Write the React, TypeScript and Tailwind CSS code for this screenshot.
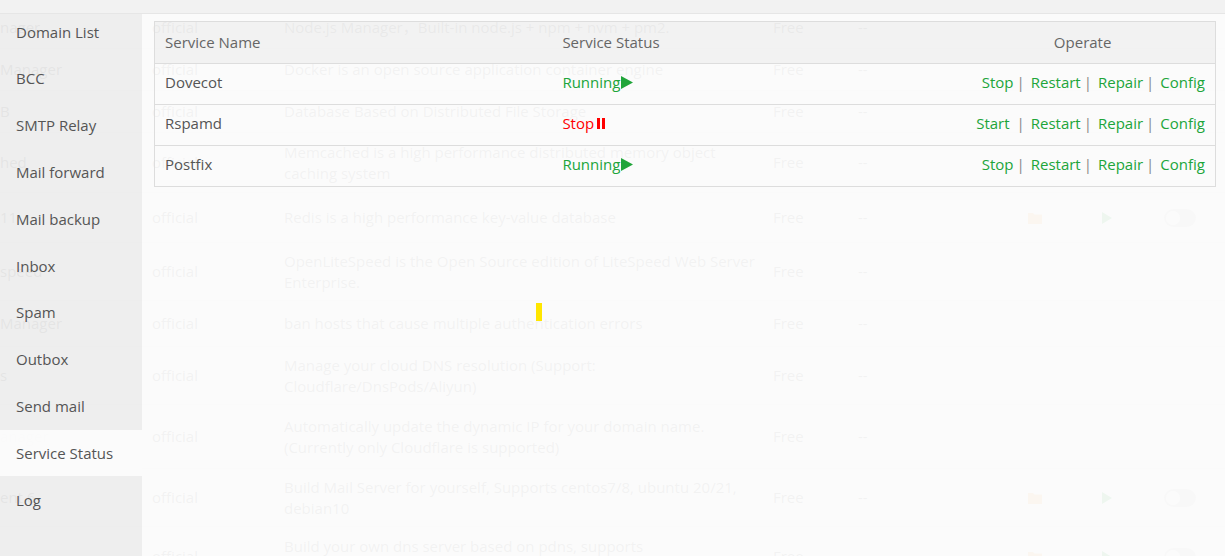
const font = { fontFamily: '"Open Sans", "Noto Sans CJK SC", sans-serif' };

type BgRow = { name: string; desc: string[]; h: number; icons?: boolean };

const bgRows: BgRow[] = [
  { name: "nager", desc: ["Node.js Manager，Built-in node.js + npm + nvm + pm2."], h: 42 },
  { name: "Manager", desc: ["Docker is an open source application container engine"], h: 42 },
  { name: "B", desc: ["Database Based on Distributed File Storage"], h: 42 },
  { name: "hed", desc: ["Memcached is a high performance distributed memory object", "caching system"], h: 60 },
  { name: "11", desc: ["Redis is a high performance key-value database"], h: 50, icons: true },
  { name: "speed", desc: ["OpenLiteSpeed is the Open Source edition of LiteSpeed Web Server", "Enterprise."], h: 58 },
  { name: "Manager", desc: ["ban hosts that cause multiple authentication errors"], h: 46 },
  { name: "s", desc: ["Manage your cloud DNS resolution (Support:", "Cloudflare/DnsPods/Aliyun)"], h: 58 },
  { name: "anager", desc: ["Automatically update the dynamic IP for your domain name.", "(Currently only Cloudflare is supported)"], h: 64 },
  { name: "ent 6", desc: ["Build Mail Server for yourself, Supports centos7/8, ubuntu 20/21,", "debian10"], h: 58, icons: true },
  { name: "", desc: ["Build your own dns server based on pdns, supports", "master/slave"], h: 60, icons: true },
];

const menu = [
  "Domain List",
  "BCC",
  "SMTP Relay",
  "Mail forward",
  "Mail backup",
  "Inbox",
  "Spam",
  "Outbox",
  "Send mail",
  "Service Status",
  "Log",
];

const services = [
  { name: "Dovecot", running: true },
  { name: "Rspamd", running: false },
  { name: "Postfix", running: true },
];

function BackgroundPage() {
  return (
    <div className="absolute inset-0 overflow-hidden bg-white text-[15px] text-[#666]" style={font}>
      <div className="pt-[7px]">
        {bgRows.map((r, i) => (
          <div key={i} className="flex items-center border-b border-[#eeeeee]" style={{ height: r.h }}>
            <div className="w-[152px] shrink-0 text-[#555]">{r.name}</div>
            <div className="w-[132px] shrink-0">official</div>
            <div className="w-[489px] shrink-0 leading-[21px]">
              {r.desc.map((l, j) => (
                <div key={j} className="whitespace-nowrap">{l}</div>
              ))}
            </div>
            <div className="w-[85px] shrink-0">Free</div>
            <div className="w-[170px] shrink-0">--</div>
            {r.icons && (
              <div className="flex items-center">
                <svg width="14" height="12" viewBox="0 0 14 12" className="mr-[60px]">
                  <path d="M0 1h5l1.5 1.5H14V12H0z" fill="#f0ad4e" />
                </svg>
                <svg width="10" height="12" viewBox="0 0 10 12" className="mr-[52px]">
                  <path d="M0 0l10 6-10 6z" fill="#20a53a" />
                </svg>
                <div className="flex h-[18px] w-[32px] items-center rounded-full bg-[#cccccc] px-[2px]">
                  <div className="h-[14px] w-[14px] rounded-full bg-white" />
                </div>
              </div>
            )}
          </div>
        ))}
      </div>
    </div>
  );
}

function Status({ running }: { running: boolean }) {
  if (running) {
    return (
      <span className="inline-flex items-center text-[#20a53a]">
        Running
        <svg width="12" height="13" viewBox="0 0 12 13" className="ml-[1px]">
          <path d="M0 0l12 6.5L0 13z" fill="#20a53a" />
        </svg>
      </span>
    );
  }
  return (
    <span className="inline-flex items-center text-[#ff0000]">
      Stop
      <span className="ml-[3px] flex gap-[2px]">
        <span className="h-[11px] w-[3px] bg-[#ff0000]" />
        <span className="h-[11px] w-[3px] bg-[#ff0000]" />
      </span>
    </span>
  );
}

function Sep() {
  return <span className="ml-[3px] mr-[6px] text-[#888]">|</span>;
}

export default function App() {
  return (
    <div className="relative h-[556px] w-[1225px] overflow-hidden" style={font}>
      <BackgroundPage />

      <div className="absolute inset-0 flex flex-col">
        <div className="h-[14px] shrink-0 border-b border-[#e6e6e6] bg-[#f1f1f1]/[0.95]" />
        <div className="flex min-h-0 flex-1">
          <div className="w-[142px] shrink-0 overflow-hidden bg-[#ededed]/[0.94]">
            <div className="-mt-[5.5px]">
              {menu.map((m) => (
                <div
                  key={m}
                  className={
                    "flex h-[46.8px] items-center pl-4 text-[15px] text-[#555] " +
                    (m === "Service Status" ? "bg-[#fcfcfc]/[0.92]" : "")
                  }
                >
                  {m}
                </div>
              ))}
            </div>
          </div>

          <div className="flex-1 bg-[#fbfbfb]/[0.94] pl-3 pr-[9px] pt-[7px]">
            <table className="w-full table-fixed border-collapse border border-[#dddddd] text-[15px] text-[#666]">
              <colgroup>
                <col className="w-[37.5%]" />
                <col className="w-[37.5%]" />
                <col className="w-[25%]" />
              </colgroup>
              <thead>
                <tr className="h-[42px] bg-black/[0.035]">
                  <th className="px-[10px] text-left font-normal">Service Name</th>
                  <th className="px-[10px] text-left font-normal">Service Status</th>
                  <th className="px-[10px] text-center font-normal">Operate</th>
                </tr>
              </thead>
              <tbody>
                {services.map((s) => (
                  <tr key={s.name} className="h-[41px] border-t border-[#dddddd]">
                    <td className="px-[10px] pb-[4px] text-[#555]">{s.name}</td>
                    <td className="px-[10px] pb-[4px]">
                      <Status running={s.running} />
                    </td>
                    <td className="whitespace-nowrap px-[10px] pb-[4px] text-right text-[#20a53a]">
                      <span>{s.running ? "Stop" : "Start\u00a0"}</span>
                      <Sep />
                      <span>Restart</span>
                      <Sep />
                      <span>Repair</span>
                      <Sep />
                      <span>Config</span>
                    </td>
                  </tr>
                ))}
              </tbody>
            </table>
          </div>
        </div>
      </div>

      <div className="absolute left-[536px] top-[303px] h-[18px] w-[6px] bg-[#ffe600]" />
    </div>
  );
}
